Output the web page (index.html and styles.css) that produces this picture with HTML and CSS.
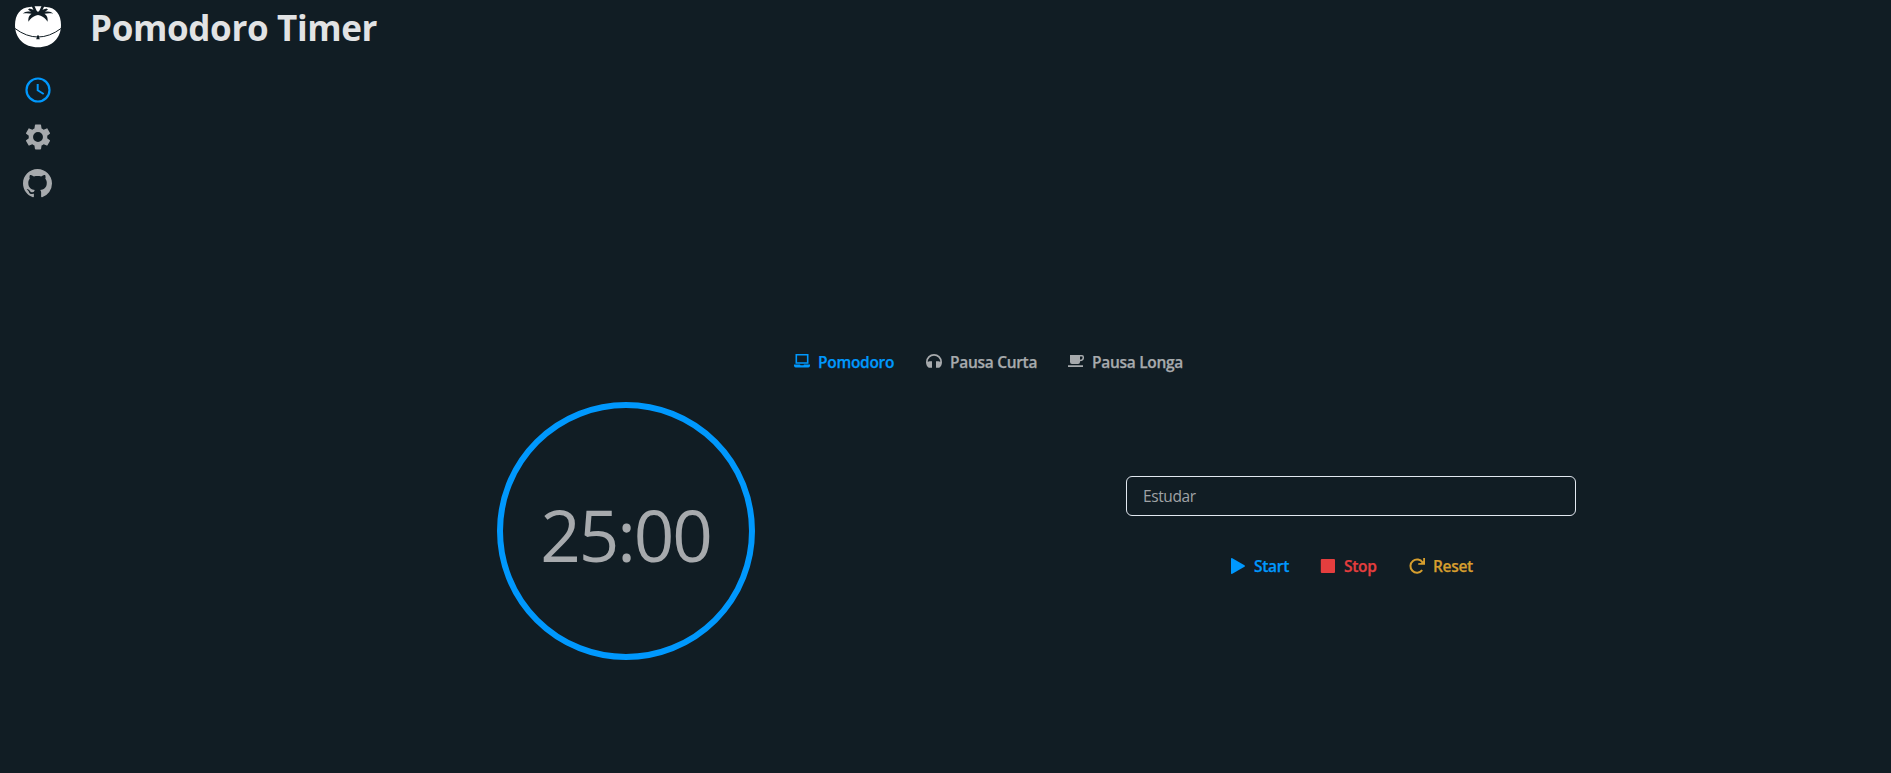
FILE: index.html
```html
<!DOCTYPE html>
<html lang="pt-BR">
<head>
<meta charset="utf-8">
<title>Pomodoro Timer</title>
<link rel="stylesheet" href="styles.css">
</head>
<body>
<div class="app">
  <aside class="sidebar">
    <svg class="logo" viewBox="0 0 46 42">
      <path fill="#fff" d="M15 1C5 1.500 0 9 0 19C0 32 9 41.300 23 41.300S46 32 46 19C46 9 41 1.500 31 1L27 .2H19Z"/>
      <path fill="#111d24" d="M16.500 0L18.500 3.800L14.500 2.500L13 3.500L16 5.800C12.500 5 10 5.500 7.800 7.500C11 7 13.500 7 16.500 7.800C13.800 9.800 13 12 13.400 15.800C15.500 12.500 18 10.600 21 9.500L23 9L25 9.500C28 10.600 30.500 12.500 32.600 15.800C33 12 32.200 9.800 29.500 7.800C32.500 7 35 7 38.200 7.500C36 5.500 33.500 5 30 5.800L33 3.500L31.500 2.500L27.500 3.800L29.500 0H26.500L24.500 4.500L23 6L21.500 4.500L19.500 0Z"/>
      <path fill="none" stroke="#111d24" stroke-width="1" d="M0 22.500Q23 39.500 46 22.500"/>
      <path fill="#111d24" d="M22 29.500H24V31L24.800 33.300H21.200L22 31Z"/>
    </svg>
    <nav class="nav">
      <svg class="nav-icon active" viewBox="0 0 28 28"><circle cx="14" cy="14" r="11.500" fill="none" stroke="currentColor" stroke-width="2.200"/><path d="M13.700 8V14.300L19.700 18" fill="none" stroke="currentColor" stroke-width="2"/></svg>
      <svg class="nav-icon" viewBox="-1 -1 26 26"><path fill="currentColor" d="M19.430 12.980c.04-.32.07-.64.07-.98s-.03-.66-.07-.98l2.110-1.650c.19-.15.24-.42.12-.64l-2-3.460c-.12-.22-.39-.3-.61-.22l-2.490 1c-.52-.4-1.080-.73-1.690-.98l-.38-2.650A.488.488 0 0 0 14 2h-4c-.25 0-.46.18-.49.42l-.38 2.650c-.61.250-1.170.59-1.690.98l-2.490-1c-.23-.09-.49 0-.61.22l-2 3.460c-.13.22-.07.49.12.64l2.110 1.650c-.04.32-.07.65-.07.98s.03.66.07.98l-2.110 1.650c-.19.15-.24.42-.12.64l2 3.460c.12.22.39.3.61.22l2.490-1c.52.4 1.080.73 1.690.98l.38 2.650c.03.24.24.42.49.42h4c.25 0 .46-.18.49-.42l.38-2.650c.61-.25 1.170-.59 1.690-.98l2.490 1c.23.09.49 0 .61-.22l2-3.460c.12-.22.07-.49-.12-.64l-2.110-1.650zM12 16a4 4 0 1 1 0-8 4 4 0 0 1 0 8z" transform="translate(-1.800 -1.800) scale(1.150)"/></svg>
      <svg class="nav-icon github" viewBox="0 0 16 16"><path fill="currentColor" d="M8 0C3.580 0 0 3.580 0 8c0 3.540 2.290 6.530 5.470 7.590.4.070.55-.17.55-.38 0-.19-.01-.82-.01-1.490-2.010.37-2.530-.49-2.690-.94-.09-.23-.48-.94-.82-1.130-.28-.15-.68-.52-.01-.53.63-.01 1.080.58 1.230.82.72 1.210 1.870.87 2.330.66.070-.52.28-.87.51-1.070-1.780-.2-3.640-.89-3.640-3.950 0-.87.31-1.590.82-2.150-.08-.2-.36-1.020.08-2.120 0 0 .67-.21 2.200.82.64-.18 1.320-.27 2-.27s1.360.09 2 .27c1.530-1.040 2.200-.82 2.200-.82.44 1.100.16 1.920.08 2.120.51.56.82 1.270.82 2.150 0 3.070-1.870 3.750-3.650 3.950.29.25.54.73.54 1.480 0 1.070-.01 1.930-.01 2.200 0 .21.15.46.55.38A8.010 8.010 0 0 0 16 8c0-4.420-3.580-8-8-8z"/></svg>
    </nav>
  </aside>
  <main class="main">
    <h1 class="title">Pomodoro Timer</h1>
    <div class="tabs">
      <button class="btn blue"><svg class="icon" viewBox="0 0 16 16"><path fill="none" stroke="currentColor" stroke-width="1.600" d="M2.300 1.800H13.700V10H2.300Z"/><path fill="currentColor" d="M0 11.500H6L6.500 12.200H9.500L10 11.500H16V13Q15.500 14.500 14 14.500H2Q.5 14.500 0 13Z"/></svg><span class="w76">Pomodoro</span></button>
      <button class="btn"><svg class="icon" viewBox="0 0 16 16"><path fill="currentColor" d="M8 1A8 8 0 0 0 0 9C0 11.500 1 13.700 2.800 14.800H6V8.200H3.500Q2.500 8.200 1.800 9A6.200 6.200 0 0 1 14.200 9Q13.500 8.200 12.500 8.200H10V14.800H13.200C15 13.700 16 11.500 16 9A8 8 0 0 0 8 1Z"/></svg><span class="w86">Pausa Curta</span></button>
      <button class="btn"><svg class="icon" viewBox="0 0 16 16"><path fill="currentColor" fill-rule="evenodd" d="M2 2H14Q16 2 16 4V5Q16 8 12 8.300V9Q12 11 10 11H4Q2 11 2 9ZM12 3.500V6.800Q14.500 6.500 14.500 5V4Q14.500 3.500 14 3.500ZM0 12.300H15V14H0Z"/></svg><span class="w91">Pausa Longa</span></button>
    </div>
    <div class="panels">
      <section class="timer"><span class="time">25:00</span></section>
      <section class="task">
        <input class="field" type="text" placeholder="Estudar">
        <div class="controls">
          <button class="btn blue"><svg class="icon" viewBox="0 0 16 16"><path fill="currentColor" d="M1 1Q1-.4 2.300.2L14.500 7.200Q15.400 8 14.500 8.800L2.300 15.800Q1 16.400 1 15Z"/></svg><span class="w34">Start</span></button>
          <button class="btn red"><svg class="icon" viewBox="0 0 16 16"><rect x=".8" y="1" width="14.200" height="14" rx="1" fill="currentColor"/></svg><span class="w33">Stop</span></button>
          <button class="btn orange"><svg class="icon" viewBox="0 0 16 16"><path fill="none" stroke="currentColor" stroke-width="2" d="M13.200 12.200A6.600 6.600 0 1 1 13.600 4.500"/><path fill="currentColor" d="M14.200 0H16V6.800H9.200V5.200L12.200 5L14.200 3Z"/></svg><span class="w39">Reset</span></button>
        </div>
      </section>
    </div>
  </main>
</div>
</body>
</html>
```
FILE: styles.css
```css
* { box-sizing: border-box; }
body {
  margin: 0;
  height: 773px;
  overflow: hidden;
  background: #111d24;
  color: #a7aaad;
  font-family: "Open Sans", "Noto Sans", sans-serif;
}
.app { display: flex; height: 773px; }
.sidebar {
  width: 75px;
  display: flex;
  flex-direction: column;
  align-items: center;
  padding-top: 6px;
}
.logo { width: 46px; height: 42px; margin-left: 1px; }
.nav { display: flex; flex-direction: column; align-items: center; gap: 19px; margin-top: 28px; }
.nav-icon { width: 28px; height: 28px; display: block; margin-left: 1px; }
.github { width: 29px; height: 29px; margin: -1px 0 0 0; }
.active { color: #0098fd; }
.main { flex: 1; }
.title {
  margin: 0 0 0 15px;
  padding-top: 6px;
  height: 341px;
  font-size: 35px;
  line-height: 43px;
  font-weight: 700;
  letter-spacing: -0.35px;
  color: #e2e3e4;
}
.tabs { display: flex; margin-left: 703px; }
.btn {
  display: flex;
  align-items: center;
  gap: 8px;
  height: 40px;
  padding: 0 16px;
  border: 0;
  background: none;
  color: #a7aaad;
  font: 600 15.500px/24px "Open Sans", "Noto Sans", sans-serif;
  letter-spacing: -0.3px;
  text-align: left;
  white-space: nowrap;
}
.icon { width: 16px; height: 16px; flex: none; }
.btn span { -webkit-text-stroke: 0.25px currentColor; }
.tabs .btn span { padding-top: 1px; }
.blue { color: #0098fd; }
.red { color: #e53e3e; }
.orange { color: #d69e2e; }
.w76 { width: 76px; }
.w86 { width: 86px; }
.w91 { width: 91px; }
.w34 { width: 34px; }
.w33 { width: 33px; }
.w39 { width: 39px; }
.panels { display: flex; align-items: flex-start; gap: 371px; margin: 21px 0 0 422px; }
.timer {
  width: 258px;
  height: 258px;
  border: 6px solid #0098fd;
  border-radius: 50%;
  display: flex;
  align-items: center;
  justify-content: center;
}
.time { font-size: 71px; line-height: 96px; letter-spacing: -2.100px; padding-top: 8px; margin-left: -1px; }
.task { width: 450px; padding-top: 74px; }
.field {
  display: block;
  width: 450px;
  height: 40px;
  border: 1px solid #e2e8f0;
  border-radius: 6px;
  padding: 0 16px;
  background: transparent;
  font: 15.500px "Open Sans", "Noto Sans", sans-serif;
  letter-spacing: -0.4px;
}
.field::placeholder { color: #a0a3a6; opacity: 1; }
.controls { display: flex; margin: 30px 0 0 88px; }
```
